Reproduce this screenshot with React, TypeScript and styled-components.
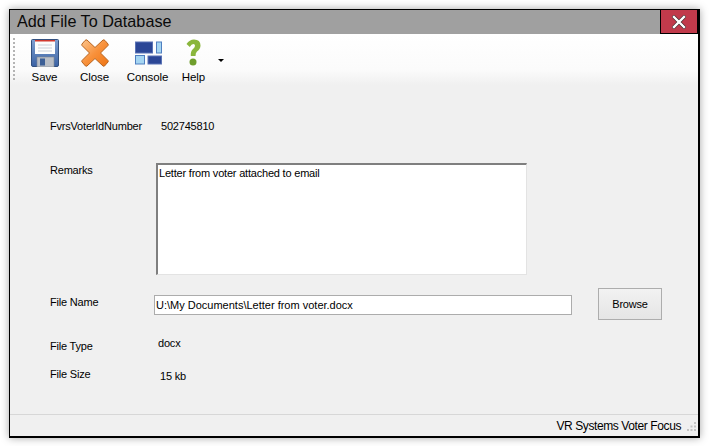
import styled, { createGlobalStyle } from 'styled-components';

const GlobalStyle = createGlobalStyle`
    html, body {
        margin: 0;
        padding: 0;
        background: #ffffff;
        font-family: "Liberation Sans", Arial, sans-serif;
        font-size: 11px;
        letter-spacing: -0.2px;
        color: #000000;
    }
`;

const Page = styled.div`
    width: 709px;
    height: 446px;
    padding: 9px 0 0 9px;
    box-sizing: border-box;
    overflow: hidden;
`;

const Window = styled.div`
    width: 691px;
    height: 429px;
    box-sizing: border-box;
    border: 1px solid #000000;
    border-bottom-width: 2px;
    border-right-width: 2px;
    background: #f0f0f0;
    display: flex;
    flex-direction: column;
    box-shadow: 0 0 8px rgba(0, 0, 0, 0.35);
`;

const TitleBar = styled.div`
    height: 24px;
    background: #a0a0a0;
    display: flex;
    align-items: center;
    justify-content: space-between;
    padding-left: 7px;
    flex: none;
`;

const Title = styled.div`
    font-size: 16.2px;
    letter-spacing: 0;
    line-height: 22px;
    margin-bottom: 2px;
    color: #0a0a0a;
`;

const CloseBox = styled.div`
    width: 38px;
    height: 24px;
    box-sizing: border-box;
    background: #c13a4b;
    border-left: 1px solid #000000;
    border-bottom: 1px solid #000000;
    border-right: 1px solid #000000;
    display: flex;
    align-items: center;
    justify-content: center;
`;

const Toolbar = styled.div`
    height: 51px;
    flex: none;
    background: linear-gradient(#ffffff, #fbfbfb 70%, #f0f0f0);
    display: flex;
    align-items: flex-start;
    padding: 4px 0 0 3px;
    box-sizing: border-box;
`;

const Grip = styled.div`
    width: 2px;
    height: 42px;
    margin-right: 5px;
    background: repeating-linear-gradient(#b4b4b4 0 2px, transparent 2px 4px);
    flex: none;
`;

const ToolButton = styled.div<{ $width: number }>`
    width: ${({ $width }) => $width}px;
    flex: none;
    display: flex;
    flex-direction: column;
    align-items: center;
`;

const ToolIcon = styled.div`
    height: 29px;
    display: flex;
    align-items: center;
    justify-content: center;
`;

const ToolLabel = styled.div`
    margin-top: 3px;
    line-height: 14px;
    font-size: 11.5px;
    letter-spacing: -0.1px;
    white-space: nowrap;
`;

const Caret = styled.div`
    width: 0;
    height: 0;
    margin: 21px 0 0 6px;
    border-left: 3px solid transparent;
    border-right: 3px solid transparent;
    border-top: 3px solid #000000;
`;

const Form = styled.div`
    flex: 1;
    padding: 33px 37px 0 40px;
    display: flex;
    flex-direction: column;
`;

const Row = styled.div<{ $top: number; $height: number }>`
    margin-top: ${({ $top }) => $top}px;
    height: ${({ $height }) => $height}px;
    display: grid;
    grid-template-columns: 104px 1fr;
    flex: none;
`;

const Label = styled.div<{ $offset: number }>`
    padding-top: ${({ $offset }) => $offset}px;
    line-height: 14px;
    white-space: nowrap;
`;

const Value = styled.div<{ $indent: number; $offset: number }>`
    padding: ${({ $offset }) => $offset}px 0 0 ${({ $indent }) => $indent}px;
    line-height: 14px;
`;

const RemarksBox = styled.div`
    margin-left: 2px;
    width: 371px;
    height: 112px;
    box-sizing: border-box;
    background: #ffffff;
    border-style: solid;
    border-width: 2px 1px 1px 2px;
    border-color: #7f7f7f #e3e3e3 #e3e3e3 #7f7f7f;
    padding: 1px 1px;
    line-height: 14px;
`;

const FileControls = styled.div`
    display: flex;
    align-items: flex-start;
`;

const FileInput = styled.div`
    margin-top: 7px;
    width: 418px;
    height: 20px;
    box-sizing: border-box;
    background: #ffffff;
    border: 1px solid #acacac;
    padding: 0 0 0 1px;
    letter-spacing: 0;
    line-height: 18px;
`;

const BrowseButton = styled.div`
    margin-left: 26px;
    width: 64px;
    height: 32px;
    box-sizing: border-box;
    border: 1px solid #adadad;
    background: linear-gradient(#f2f2f2, #e5e5e5);
    display: flex;
    align-items: center;
    justify-content: center;
`;

const StatusBar = styled.div`
    height: 22px;
    flex: none;
    box-sizing: border-box;
    border-top: 1px solid #d7d7d7;
    display: flex;
    align-items: center;
    justify-content: flex-end;
    padding: 0 2px 0 0;
    font-size: 12px;
    letter-spacing: -0.4px;
`;

const StatusText = styled.span`
    margin-right: 5px;
`;

const SaveIcon = () => (
    <svg width="28" height="28" viewBox="0 0 28 28">
        <defs>
            <linearGradient id="disk" x1="0" y1="0" x2="0" y2="1">
                <stop offset="0" stopColor="#7f9fd0" />
                <stop offset="1" stopColor="#3a62a4" />
            </linearGradient>
        </defs>
        <path d="M0.5 1.5 Q0.5 0.5 1.5 0.5 H26.5 Q27.5 0.5 27.5 1.5 V26 Q27.5 27.5 26 27.5 H2 Q0.5 27.5 0.5 26 Z" fill="url(#disk)" stroke="#32507f" />
        <rect x="4" y="1" width="20" height="14" fill="#fdfdfd" />
        <rect x="4" y="1" width="20" height="1.5" fill="#d23a30" />
        <path d="M7 6 H21 M7 9 H21 M7 12 H21" stroke="#c9cfd8" />
        <rect x="6" y="18" width="17" height="10" fill="#b9bec6" stroke="#7d858f" strokeWidth="0.6" />
        <rect x="9" y="19.5" width="5" height="7" fill="#3c5f96" />
    </svg>
);

const CloseIcon = () => (
    <svg width="28" height="28" viewBox="0 0 28 28">
        <defs>
            <linearGradient id="cross" x1="0" y1="0" x2="1" y2="1">
                <stop offset="0" stopColor="#fbc58e" />
                <stop offset="0.5" stopColor="#f8913b" />
                <stop offset="1" stopColor="#ee7413" />
            </linearGradient>
        </defs>
        <path
            d="M6 1 L14 8.500 L22 1 Q23 0.500 24 1.500 L27 5 Q27.500 6 27 6.500 L19.500 14 L27 21.500 Q27.500 22.500 27 23 L23.500 27 Q22.500 27.500 22 27 L14 19.500 L6 27 Q5 27.500 4.500 27 L1 23 Q0.500 22.500 1 21.500 L8.500 14 L1 6.500 Q0.500 6 1 5 L4 1.500 Q5 0.500 6 1 Z"
            fill="url(#cross)"
            stroke="#b8641f"
        />
    </svg>
);

const ConsoleIcon = () => (
    <svg width="28" height="24" viewBox="-1 0 28 24">
        <rect x="0.5" y="1" width="17" height="11" fill="#2b4696" stroke="#5a73b5" />
        <rect x="21.5" y="1" width="5" height="11" fill="#a5d5f2" stroke="#4f7fc0" />
        <rect x="0.5" y="14.5" width="9" height="8.500" fill="#a5d5f2" stroke="#4f7fc0" />
        <rect x="13" y="15" width="13.500" height="8" fill="#2b4696" stroke="#5a73b5" />
    </svg>
);

const HelpIcon = () => (
    <svg width="15" height="27" viewBox="0 0 15 27">
        <path
            d="M0.500 5 Q3.500 0.500 8 0.500 Q14.500 0.500 14.500 6.500 Q14.500 10 11 12.500 Q9.500 13.500 9.500 17 H4.800 Q4.300 12 7.300 9.800 Q9 8.500 9 6.800 Q9 5 7.300 5 Q5.500 5 3.800 8 Z"
            fill="#8ab63c"
        />
        <circle cx="7" cy="23" r="3.500" fill="#6f9e2c" />
    </svg>
);

const WindowCloseGlyph = () => (
    <svg width="14" height="14" viewBox="0 0 14 14">
        <path d="M2 2 L12 12 M12 2 L2 12" stroke="#3a2b2d" strokeWidth="3.6" strokeLinecap="square" />
        <path d="M2 2 L12 12 M12 2 L2 12" stroke="#ffffff" strokeWidth="2.4" strokeLinecap="square" />
    </svg>
);

const ResizeGrip = () => (
    <svg width="10" height="10" viewBox="0 0 10 10">
        <path d="M8 1h2v2H8zM4.500 4.500h2v2h-2zM8 4.500h2v2H8zM1 8h2v2H1zM4.500 8h2v2h-2zM8 8h2v2H8z" fill="#c4c4c4" />
    </svg>
);

const TOOLS = [
    { label: 'Save', width: 49, icon: <SaveIcon /> },
    { label: 'Close', width: 51, icon: <CloseIcon /> },
    { label: 'Console', width: 55, icon: <ConsoleIcon /> },
    { label: 'Help', width: 37, icon: <HelpIcon /> }
];

function App() {
    return (
        <Page>
            <GlobalStyle />
            <Window>
                <TitleBar>
                    <Title>Add File To Database</Title>
                    <CloseBox>
                        <WindowCloseGlyph />
                    </CloseBox>
                </TitleBar>
                <Toolbar>
                    <Grip />
                    {TOOLS.map((tool) => (
                        <ToolButton key={tool.label} $width={tool.width}>
                            <ToolIcon>{tool.icon}</ToolIcon>
                            <ToolLabel>{tool.label}</ToolLabel>
                        </ToolButton>
                    ))}
                    <Caret />
                </Toolbar>
                <Form>
                    <Row $top={0} $height={16}>
                        <Label $offset={1}>FvrsVoterIdNumber</Label>
                        <Value $indent={7} $offset={1}>502745810</Value>
                    </Row>
                    <Row $top={29} $height={112}>
                        <Label $offset={0}>Remarks</Label>
                        <RemarksBox>Letter from voter attached to email</RemarksBox>
                    </Row>
                    <Row $top={13} $height={32}>
                        <Label $offset={7}>File Name</Label>
                        <FileControls>
                            <FileInput>U:\My Documents\Letter from voter.docx</FileInput>
                            <BrowseButton>Browse</BrowseButton>
                        </FileControls>
                    </Row>
                    <Row $top={16} $height={18}>
                        <Label $offset={3}>File Type</Label>
                        <Value $indent={4} $offset={0}>docx</Value>
                    </Row>
                    <Row $top={12} $height={18}>
                        <Label $offset={1}>File Size</Label>
                        <Value $indent={6} $offset={3}>15 kb</Value>
                    </Row>
                </Form>
                <StatusBar>
                    <StatusText>VR Systems Voter Focus</StatusText>
                    <ResizeGrip />
                </StatusBar>
            </Window>
        </Page>
    );
}

export default App;
